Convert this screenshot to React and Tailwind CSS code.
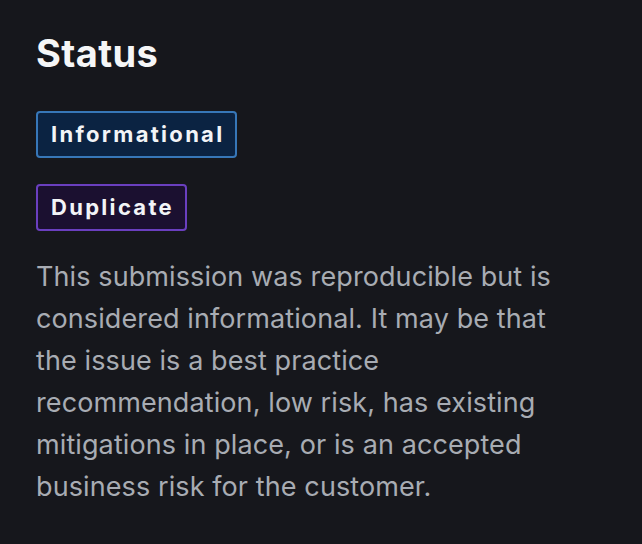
export default function App() {
  return (
    <div className="min-h-screen bg-[#16171c] px-9 pt-[31px] font-['Inter','Liberation_Sans',sans-serif]">
      <h1 className="text-[38px] font-bold leading-[44px] tracking-[0.4px] text-[#f5f6f7]">Status</h1>

      <div className="mt-9 flex flex-col items-start gap-[26px]">
        <span className="rounded-[4px] border-2 border-[#3777b8] bg-[#0b2342] pl-[13px] pr-[11px] py-[6px] text-[22px] font-bold leading-[31px] tracking-[2.3px] text-[#f2f4f7]">
          Informational
        </span>
        <span className="rounded-[4px] border-2 border-[#6a3fbf] bg-[#1b1030] pl-[13px] pr-[11px] py-[6px] text-[22px] font-bold leading-[31px] tracking-[2.3px] text-[#f2f4f7]">
          Duplicate
        </span>
      </div>

      <p className="mt-[25px] w-[540px] text-[27px] leading-[42px] tracking-[0.1px] text-[#a8acb3]">
        This submission was reproducible but is considered informational. It may be that the issue is a best practice recommendation, low risk, has existing mitigations in place, or is an accepted business risk for the customer.
      </p>
    </div>
  );
}
